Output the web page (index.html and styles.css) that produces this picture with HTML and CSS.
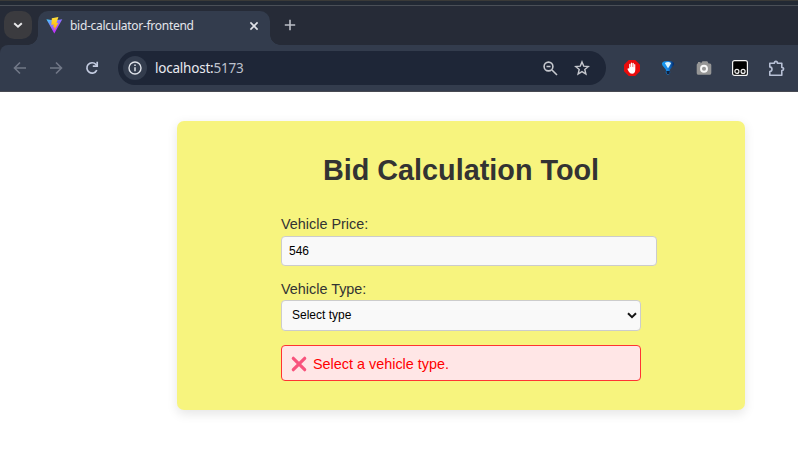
FILE: index.html
```
<!DOCTYPE html>
<html lang="en">
<head>
<meta charset="utf-8">
<title>bid-calculator-frontend</title>
<link rel="stylesheet" href="styles.css">
</head>
<body>
<header class="browser">
  <div class="tabstrip">
    <div class="tab-search">
      <svg width="28" height="28" viewBox="0 0 28 28"><path d="M10.2 12.2l3.8 3.6 3.8-3.6" fill="none" stroke="#e8e8ea" stroke-width="1.9"/></svg>
    </div>
    <div class="tab">
      <svg class="favicon" width="17" height="17" viewBox="0 0 17 17">
        <defs>
          <linearGradient id="v" x1="0" y1="0" x2=".7" y2="1"><stop offset="0" stop-color="#41d1ff"/><stop offset=".8" stop-color="#bd34fe"/></linearGradient>
          <linearGradient id="b" x1="0" y1="0" x2="0" y2="1"><stop offset="0" stop-color="#ffdf40"/><stop offset=".4" stop-color="#ffce20"/><stop offset="1" stop-color="#ffa800"/></linearGradient>
        </defs>
        <path d="M.4 2.2L8.3 16.5 16.3 2.2 8.4 3.6z" fill="url(#v)"/>
        <path d="M12.4 0L5.800 1.200 5.400 8l2.400-.4-.7 2.800 1.500-.4-.4 3.500 4.300-7.700-2.100.4z" fill="url(#b)"/>
      </svg>
      <span class="tab-title">bid-calculator-frontend</span>
      <svg class="tab-close" width="10" height="10" viewBox="0 0 10 10"><path d="M1.4 1.4l7.2 7.2M8.6 1.4L1.4 8.6" stroke="#e0e2e8" stroke-width="1.6"/></svg>
    </div>
    <svg class="new-tab" width="12" height="12" viewBox="0 0 12 12"><path d="M6 .8v10.4M.8 6h10.4" stroke="#bbbec6" stroke-width="1.6"/></svg>
  </div>
  <nav class="toolbar">
    <svg class="back" width="14" height="14" viewBox="0 0 14 14"><path d="M13 7H2M7 1.5L1.5 7 7 12.5" fill="none" stroke="#717887" stroke-width="1.6"/></svg>
    <svg class="forward" width="14" height="14" viewBox="0 0 14 14"><path d="M1 7h11M7 1.5L12.5 7 7 12.5" fill="none" stroke="#717887" stroke-width="1.6"/></svg>
    <svg class="reload" width="14" height="14" viewBox="0 0 14 14"><path d="M11.8 9.2A5.2 5.2 0 1 1 11 3.5l1.1 1.2" fill="none" stroke="#c3cbe0" stroke-width="1.7"/><path d="M12.2.8v4.4H7.8" fill="none" stroke="#c3cbe0" stroke-width="1.7"/></svg>
    <div class="address">
      <span class="site-info"><svg width="14" height="14" viewBox="0 0 14 14"><circle cx="7" cy="7" r="6" fill="none" stroke="#dfe2e9" stroke-width="1.4"/><path d="M7 6.2v4M7 3.5v1.5" stroke="#dfe2e9" stroke-width="1.5"/></svg></span>
      <span class="url">localhost:<span class="port">5173</span></span>
      <svg class="magnifier" width="15" height="15" viewBox="0 0 15 15"><path d="M9 9l5 5M3.5 5.5h4" stroke="#c6c8ce" stroke-width="1.6"/><circle cx="5.5" cy="5.5" r="4.4" fill="none" stroke="#c6c8ce" stroke-width="1.6"/></svg>
      <svg class="star" width="16" height="16" viewBox="0 0 16 16"><path d="M8 1.9l1.7 4.2 4.6.4-3.5 3 1.1 4.5L8 11.6 4.1 14l1.1-4.5-3.5-3 4.6-.4z" fill="none" stroke="#c6c8ce" stroke-width="1.4"/></svg>
    </div>
    <div class="extensions">
      <svg width="16" height="16" viewBox="0 0 16 16"><path d="M4.800 0h6.400L16 4.800v6.400L11.200 16H4.800L0 11.200V4.800z" fill="#e90b0b"/><path d="M5.200 8.500V4.200q.7-.9 1.200 0V7h.4V3q.7-.9 1.300 0v4h.4V3.200q.7-.9 1.300 0v4.100h.3V4.500q.7-.8 1.200 0v5.200q-.2 3.800-3.200 4-2.200 0-3.400-2.300L3.400 9.100q.5-1.200 1.800-.6z" fill="#fff"/></svg>
      <svg width="16" height="16" viewBox="0 0 16 16">
        <defs><linearGradient id="drop"><stop offset="0" stop-color="#159cf0"/><stop offset=".5" stop-color="#1787e8"/><stop offset="1" stop-color="#022663"/></linearGradient></defs>
        <path d="M2 3.500C2 .2 14 .2 14 3.500c0 2.800-3.500 4.500-4.200 7q1.200 2.500-.8 3.800-1 .6-2 0-2-1.300-.8-3.800C5.500 8 2 6.300 2 3.500z" fill="url(#drop)"/><path d="M4.800 3q3.500-1.800 6.400 0L8.500 7.800H7.600z" fill="#d9f4ff"/><path d="M6.300 11h3.500l-.4 3H6.800z" fill="#11233f"/>
      </svg>
      <svg width="16" height="16" viewBox="0 0 16 16"><path d="M2 3.200V2h2.500v1.200H5L6.500 1.300h4.800L12.600 3.500H14q1.300 0 1.300 1.500v8q0 1.700-1.300 1.700H2Q.7 14.700.7 13V5Q.7 3.500 2 3.200z" fill="#969696"/><circle cx="8" cy="8.700" r="3" fill="#999" stroke="#f8f8f8" stroke-width="1.900"/></svg>
      <svg width="16" height="16" viewBox="0 0 16 16"><rect x=".6" y=".6" width="14.800" height="14.800" rx="2" fill="#000" stroke="#f4f4f4" stroke-width="1.200"/><circle cx="4.900" cy="11.400" r="2" fill="#111" stroke="#eee" stroke-width="1.200"/><circle cx="11.100" cy="11.400" r="2" fill="#111" stroke="#eee" stroke-width="1.200"/></svg>
      <svg width="17" height="17" viewBox="0 0 17 17"><path d="M1.800 3.200h4.600C6.400.8 9.400.8 9.400 3.200h4.400v4.300c2.400 0 2.400 3 0 3v4.700h-12v-3.700c2.900-.3 2.900-4.300 0-4.600z" fill="none" stroke="#b7c0d5" stroke-width="1.600" stroke-linejoin="round"/></svg>
    </div>
  </nav>
</header>
<main class="card">
  <h1>Bid Calculation Tool</h1>
  <form class="form">
    <label for="price">Vehicle Price:</label>
    <input id="price" type="text" value="546">
    <label class="type-label" for="type">Vehicle Type:</label>
    <div class="select-wrap">
      <select id="type"><option>Select type</option></select>
      <svg class="chevron" width="10" height="7" viewBox="0 0 10 7"><path d="M1 1.200l4 3.900 4-3.900" fill="none" stroke="#151515" stroke-width="2"/></svg>
    </div>
    <div class="error" role="alert">
      <svg width="16" height="16" viewBox="0 0 16 16"><path d="M2.300 2.300l11.400 11.400M13.700 2.300L2.300 13.700" stroke="#f8537c" stroke-width="3.200" stroke-linecap="round"/></svg>
      <span>Select a vehicle type.</span>
    </div>
  </form>
</main>
</body>
</html>
```
FILE: styles.css
```
* { box-sizing: border-box; }
body {
  margin: 0;
  height: 454px;
  overflow: hidden;
  background: #fff;
  color: #333;
  font: 14.4px "Liberation Sans", Arial, sans-serif;
}
svg { display: block; flex: none; }

.browser {
  height: 92px;
  background: #262b37;
  border-top: 1px solid #3a3a38;
  font-family: "Noto Sans", sans-serif;
}
.tabstrip {
  display: flex;
  height: 44px;
  padding: 5px 4px 0;
  background: linear-gradient(#222934 4px, #4a4f57 4px, #4a4f57 5px, #262b37 5px);
}
.tab-search {
  width: 28px;
  height: 28px;
  margin: 5px 6px 0 0;
  border-radius: 10px;
  background: #3b3b3f;
}
.tab {
  position: relative;
  display: flex;
  align-items: center;
  width: 232px;
  height: 34px;
  margin-top: 5px;
  padding: 0 11px 5px 8px;
  border-radius: 10px 10px 0 0;
  background: #333c4d;
}
.tab::before,
.tab::after {
  content: "";
  position: absolute;
  bottom: 0;
  width: 10px;
  height: 10px;
}
.tab::before { left: -10px; background: radial-gradient(circle at 0 0, transparent 9.5px, #333c4d 10px); }
.tab::after { right: -10px; background: radial-gradient(circle at 100% 0, transparent 9.5px, #333c4d 10px); }
.tab-title {
  margin-left: 7px;
  color: #e3e5eb;
  font-size: 12px;
  letter-spacing: -.28px;
  white-space: nowrap;
}
.tab-close { margin-left: auto; }
.new-tab { margin: 13px 0 0 14px; }

.toolbar {
  display: flex;
  align-items: center;
  height: 47px;
  padding-left: 13px;
  border-bottom: 1px solid #474a52;
  border-radius: 8px 0 0 0;
  background: #333c4d;
}
.forward { margin-left: 22px; }
.reload { margin-left: 22px; }
.address {
  display: flex;
  align-items: center;
  width: 488px;
  height: 34px;
  margin-left: 19px;
  padding: 0 16px 0 5px;
  border-radius: 17px;
  background: #1e2637;
}
.site-info {
  display: grid;
  place-items: center;
  width: 24px;
  height: 24px;
  border-radius: 50%;
  background: #333c4d;
}
.url { margin-left: 8px; color: #e8eaf0; font-size: 13.5px; letter-spacing: -.22px; }
.port { color: #bcc1cc; }
.magnifier { margin-left: auto; }
.star { margin-left: 16px; }
.extensions { display: flex; gap: 20px; margin-left: 18px; }

.card {
  width: 568px;
  height: 289px;
  margin: 29px 0 0 177px;
  padding: 32px 104px 0;
  border-radius: 7px;
  background: #f7f47e;
  box-shadow: 0 3.6px 10.8px rgba(0, 0, 0, .1);
}
h1 {
  margin: 0 0 29px;
  font-size: 28.8px;
  line-height: 34px;
  text-align: center;
}
.form { display: flex; flex-direction: column; }
label { height: 20px; line-height: 17px; }
.type-label { height: 19px; }
input, select {
  padding: 0 7px;
  border: 1px solid #ccc;
  border-radius: 4px;
  background: #f9f9f9;
  color: #000;
  font: 12px "Liberation Sans", Arial, sans-serif;
}
input { width: 376px; height: 30px; margin-bottom: 15px; }
.select-wrap { position: relative; height: 31px; }
select { appearance: none; width: 100%; height: 31px; padding: 0 7px 1px 10px; }
.chevron { position: absolute; right: 4px; top: 12px; }
.error {
  display: flex;
  align-items: center;
  gap: 6px;
  height: 36px;
  margin-top: 14px;
  padding: 2px 9px 0;
  border: 1px solid #ff3333;
  border-radius: 4px;
  background: #ffe6e6;
  color: #f00;
}
```
